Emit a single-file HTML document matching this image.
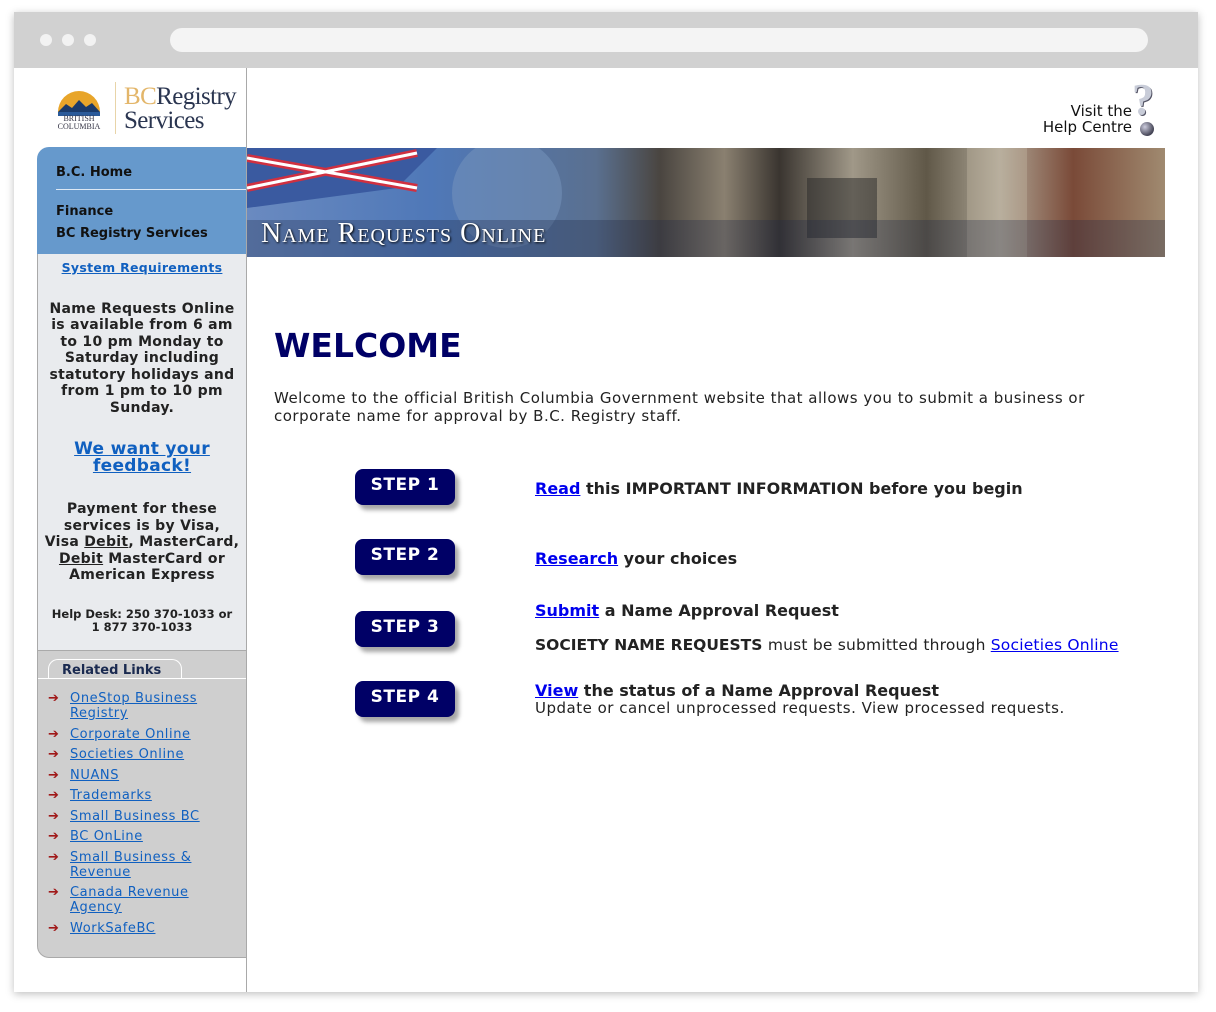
<!DOCTYPE html>
<html><head><meta charset="utf-8"><style>
*{margin:0;padding:0;box-sizing:border-box}
body{width:1216px;height:1012px;background:#fff;font-family:"DejaVu Sans",Verdana,sans-serif;position:relative;overflow:hidden}
.frame{position:absolute;left:14px;top:12px;width:1184px;height:980px;background:#fff;box-shadow:0 2px 8px rgba(0,0,0,.25)}
.bar{position:absolute;left:0;top:0;width:1184px;height:56px;background:#d1d1d1}
.dot{position:absolute;top:22px;width:12px;height:12px;border-radius:50%;background:#f2f2f2}
.url{position:absolute;left:156px;top:16px;width:978px;height:24px;border-radius:12px;background:#f4f4f4}
.abs{position:absolute}
.vline{left:232px;top:56px;width:1px;height:924px;background:#a9a9a9}
.nav{left:23px;top:135px;width:209px;height:107px;background:#6699cc;border-top-left-radius:12px;font-size:13px;font-weight:bold;color:#111}
.gp{left:23px;top:242px;width:209px;height:396px;background:#e9ebee;border-left:1px solid #a9a9a9;text-align:center;font-size:14px;font-weight:bold;color:#222;line-height:16.5px;letter-spacing:.3px}
.rl{left:23px;top:638px;width:209px;height:308px;background:#cfcfcf;border-left:1px solid #a9a9a9;border-bottom:1px solid #a9a9a9;border-bottom-left-radius:12px;border-top:1px solid #aaa}
.rl ul{list-style:none;position:absolute;left:10px;top:40px;font-size:13px;line-height:15px;letter-spacing:.6px}
.rl li{padding-left:22px;position:relative;margin-bottom:5.5px}
.rl li:before{content:"➔";position:absolute;left:0;top:0;color:#a01818;font-size:13px;font-weight:bold}
.rl a{color:#1060c0}
a{color:#0000ee}
.main{font-size:15px;color:#222;letter-spacing:.2px}
.step{width:100px;height:36px;background:#000066;border-radius:8px;color:#fff;font-weight:bold;font-size:17px;text-align:center;line-height:32px;box-shadow:4px 5px 4px rgba(0,0,0,.35);letter-spacing:.5px}
.st{font-size:16px;font-weight:bold;color:#222}
</style></head><body>
<div class="frame">
<div class="bar"><div class="dot" style="left:26px"></div><div class="dot" style="left:48px"></div><div class="dot" style="left:70px"></div><div class="url"></div></div>

<svg class="abs" style="left:40px;top:74px" width="50" height="32"><path d="M4 26 A21 21 0 0 1 46 26Z" fill="#e8a52a"/><path d="M4 26 L12 18 L18 22 L25 14 L32 21 L38 17 L46 26Z" fill="#1a3a6a"/><path d="M4 26 h42 v4 h-42z" fill="#2a5a9a"/></svg>
<div class="abs" style="left:38px;top:103px;font-family:'Liberation Serif',serif;font-size:8px;color:#334;text-align:center;width:54px;line-height:8px">BRITISH<br>COLUMBIA</div>
<div class="abs" style="left:101px;top:70px;width:1px;height:52px;background:#e8d4a8"></div>
<div class="abs" style="left:110px;top:73px;font-family:'Liberation Serif',serif;font-size:25px;line-height:24px;color:#2a3550;letter-spacing:-.6px"><span style="color:#e3b66a">BC</span>Registry<br>Services</div>

<div class="abs" style="left:1010px;top:91px;font-family:'DejaVu Sans',sans-serif;font-size:15px;line-height:16px;text-align:right;width:108px;color:#111">Visit the<br>Help Centre</div>
<div class="abs" style="left:1118px;top:66px;font-family:'Liberation Serif',serif;font-size:44px;font-weight:bold;color:#c8ccd8;line-height:44px;text-shadow:1px 1px 0 #556">?</div>
<div class="abs" style="left:1126px;top:110px;width:14px;height:14px;border-radius:50%;background:radial-gradient(circle at 35% 35%,#ccd,#445 70%)"></div>

<div class="abs vline"></div>
<div class="abs nav"><div style="position:absolute;left:19px;top:18px">B.C. Home</div><div style="position:absolute;left:19px;top:42px;width:190px;height:1px;background:#dde8f4"></div><div style="position:absolute;left:19px;top:54px;line-height:22px">Finance<br>BC Registry Services</div></div>
<div class="abs gp">
<div style="margin-top:6px;font-size:12.5px"><a href="#" style="color:#1060c0">System Requirements</a></div>
<div style="margin-top:24px">Name Requests Online<br>is available from 6 am<br>to 10 pm Monday to<br>Saturday including<br>statutory holidays and<br>from 1 pm to 10 pm<br>Sunday.</div>
<div style="margin-top:25px;font-size:17px;line-height:17px"><a href="#" style="color:#1060c0">We want your<br>feedback!</a></div>
<div style="margin-top:26px">Payment for these<br>services is by Visa,<br>Visa <u>Debit</u>, MasterCard,<br><u>Debit</u> MasterCard or<br>American Express</div>
<div style="margin-top:24px;font-size:11.5px;line-height:13px;letter-spacing:0">Help Desk: 250 370-1033 or<br>1 877 370-1033</div>
</div>
<div class="abs rl">
<div style="position:absolute;left:10px;top:8px;width:134px;height:20px;border:1px solid #fff;border-bottom:none;border-radius:10px 10px 0 0;font-size:13px;font-weight:bold;color:#1a2a50;padding:3px 0 0 13px">Related Links</div>
<div style="position:absolute;left:0;top:27px;width:208px;height:1px;background:#fff"></div>
<ul>
<li><a href="#">OneStop Business<br>Registry</a></li>
<li><a href="#">Corporate Online</a></li>
<li><a href="#">Societies Online</a></li>
<li><a href="#">NUANS</a></li>
<li><a href="#">Trademarks</a></li>
<li><a href="#">Small Business BC</a></li>
<li><a href="#">BC OnLine</a></li>
<li><a href="#">Small Business &amp;<br>Revenue</a></li>
<li><a href="#">Canada Revenue<br>Agency</a></li>
<li><a href="#">WorkSafeBC</a></li>
</ul></div>

<div class="abs" style="left:233px;top:136px;width:918px;height:109px;background:linear-gradient(90deg,#6a8ac0 0%,#4f78b8 20%,#5a7090 38%,#4a4540 45%,#8a8070 52%,#3a3530 58%,#a09888 66%,#605848 74%,#b0a898 82%,#7a4a38 90%,#a08a70 100%)">
<svg width="918" height="109" style="position:absolute;left:0;top:0"><path d="M0 0 L190 0 L150 40 L0 60Z" fill="#3a5aa0"/><path d="M0 10 L170 40 M0 40 L170 5" stroke="#d03040" stroke-width="8"/><path d="M0 10 L170 40 M0 40 L170 5" stroke="#fff" stroke-width="3"/><circle cx="260" cy="45" r="55" fill="rgba(120,150,190,.5)"/><rect x="560" y="30" width="70" height="60" fill="rgba(40,40,40,.5)"/><rect x="720" y="0" width="60" height="109" fill="rgba(200,190,170,.35)"/><rect x="0" y="72" width="918" height="37" fill="rgba(30,40,70,.3)"/></svg>
<div style="position:absolute;left:14px;top:70px;font-family:'Liberation Serif',serif;font-size:28px;color:#fff;font-variant:small-caps;letter-spacing:1px;text-shadow:1px 1px 2px #000">Name Requests Online</div>
</div>

<div class="abs" style="left:260px;top:314px;font-size:33px;font-weight:bold;color:#000066">WELCOME</div>
<div class="abs main" style="left:260px;top:377px;line-height:18px;width:860px;letter-spacing:.5px">Welcome to the official British Columbia Government website that allows you to submit a business or corporate name for approval by B.C. Registry staff.</div>

<div class="abs step" style="left:341px;top:457px">STEP 1</div>
<div class="abs step" style="left:341px;top:527px">STEP 2</div>
<div class="abs step" style="left:341px;top:599px">STEP 3</div>
<div class="abs step" style="left:341px;top:669px">STEP 4</div>

<div class="abs st" style="left:521px;top:467px"><a href="#">Read</a> this IMPORTANT INFORMATION before you begin</div>
<div class="abs st" style="left:521px;top:537px"><a href="#">Research</a> your choices</div>
<div class="abs st" style="left:521px;top:589px"><a href="#">Submit</a> a Name Approval Request</div>
<div class="abs st" style="left:521px;top:624px;font-size:15.5px">SOCIETY NAME REQUESTS <span style="font-weight:normal;font-size:15.5px;letter-spacing:.2px">must be submitted through <a href="#">Societies Online</a></span></div>
<div class="abs st" style="left:521px;top:669px"><a href="#">View</a> the status of a Name Approval Request</div>
<div class="abs main" style="left:521px;top:687px;letter-spacing:.5px">Update or cancel unprocessed requests. View processed requests.</div>
</div>
</body></html>
